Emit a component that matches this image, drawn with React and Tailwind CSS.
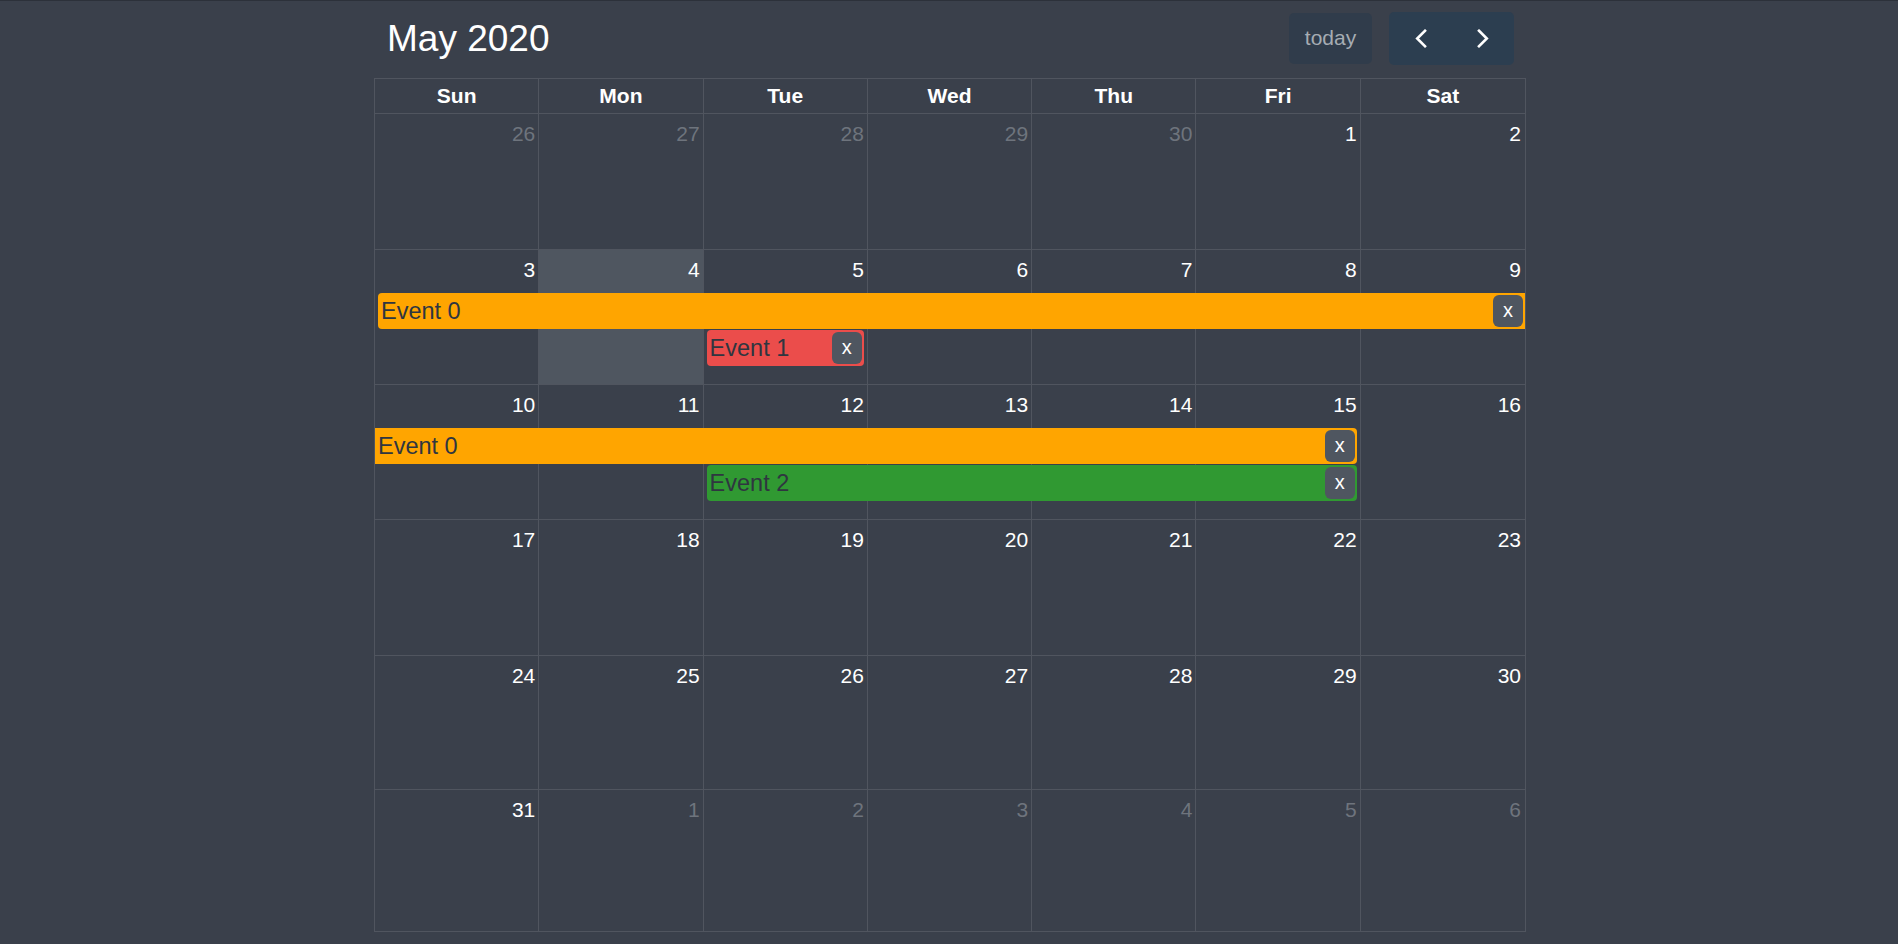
import React from "react";

const font = { fontFamily: '"Liberation Sans", Arial, sans-serif' };

const weeks = [
  {
    h: "h-[136px]",
    days: [
      { n: 26, o: true },
      { n: 27, o: true },
      { n: 28, o: true },
      { n: 29, o: true },
      { n: 30, o: true },
      { n: 1 },
      { n: 2 },
    ],
    events: [],
  },
  {
    h: "h-[135px]",
    days: [{ n: 3 }, { n: 4, t: true }, { n: 5 }, { n: 6 }, { n: 7 }, { n: 8 }, { n: 9 }],
    events: [
      {
        label: "Event 0",
        cls: "col-start-1 col-span-7 row-start-2 ml-[3px] rounded-l-[4px] bg-[#ffa500]",
      },
      {
        label: "Event 1",
        cls: "col-start-3 col-span-1 row-start-3 ml-[3px] mr-[4px] rounded-[4px] bg-[#eb4d4b]",
      },
    ],
  },
  {
    h: "h-[135px]",
    days: [{ n: 10 }, { n: 11 }, { n: 12 }, { n: 13 }, { n: 14 }, { n: 15 }, { n: 16 }],
    events: [
      {
        label: "Event 0",
        cls: "col-start-1 col-span-6 row-start-2 mr-[4px] rounded-r-[4px] bg-[#ffa500]",
      },
      {
        label: "Event 2",
        cls: "col-start-3 col-span-4 row-start-3 ml-[3px] mr-[4px] rounded-[4px] bg-[#309932]",
      },
    ],
  },
  {
    h: "h-[136px]",
    days: [{ n: 17 }, { n: 18 }, { n: 19 }, { n: 20 }, { n: 21 }, { n: 22 }, { n: 23 }],
    events: [],
  },
  {
    h: "h-[134px]",
    days: [{ n: 24 }, { n: 25 }, { n: 26 }, { n: 27 }, { n: 28 }, { n: 29 }, { n: 30 }],
    events: [],
  },
  {
    h: "h-[142px]",
    days: [
      { n: 31 },
      { n: 1, o: true },
      { n: 2, o: true },
      { n: 3, o: true },
      { n: 4, o: true },
      { n: 5, o: true },
      { n: 6, o: true },
    ],
    events: [],
  },
];

const dayNames = ["Sun", "Mon", "Tue", "Wed", "Thu", "Fri", "Sat"];

function Chevron({ left }) {
  return (
    <svg width="12" height="19" viewBox="0 0 12 19" fill="none">
      <polyline
        points={left ? "10,1.8 2.2,9.5 10,17.2" : "2,1.8 9.8,9.5 2,17.2"}
        stroke="white"
        strokeWidth="2.6"
        strokeLinecap="square"
        strokeLinejoin="miter"
      />
    </svg>
  );
}

function Event({ label, cls }) {
  return (
    <div className={`${cls} h-[36px] mb-[1px] flex items-center justify-between min-w-0`}>
      <span className="pl-[3px] pt-[2px] text-[23.5px] leading-none text-[#2f3640] whitespace-nowrap">
        {label}
      </span>
      <div className="mr-[2px] w-[30px] h-[32px] rounded-[6px] bg-[#4f5660] flex items-center justify-center text-white text-[20px] leading-none pb-[3px] shrink-0">
        x
      </div>
    </div>
  );
}

export default function App() {
  return (
    <div
      className="min-h-screen bg-[#3a404b] border-t border-[#2c313a] text-white flex justify-center pl-[2px]"
      style={font}
    >
      <div className="w-[1152px]">
        <div className="h-[77px] px-[12px] pt-[11px] flex justify-between items-start">
          <div className="h-[53px] flex items-center pl-[1px]">
            <h1 className="text-[37px] leading-none font-normal text-white">May 2020</h1>
          </div>
          <div className="h-[53px] flex items-center gap-[17px]">
            <div className="w-[83px] h-[51px] rounded-[5px] bg-[#303c4b] flex items-center justify-center text-[21px] text-[#a6acb3] pb-[2px]">
              today
            </div>
            <div className="w-[125px] h-[53px] rounded-[5px] bg-[#2c3e50] flex">
              <div className="flex-1 flex items-center justify-center pl-[1px]">
                <Chevron left />
              </div>
              <div className="flex-1 flex items-center justify-center">
                <Chevron />
              </div>
            </div>
          </div>
        </div>

        <div className="border border-[#50555f]">
          <div className="grid grid-cols-7 h-[34px]">
            {dayNames.map((d, i) => (
              <div
                key={d}
                className={`flex items-center justify-center text-[21px] font-bold text-white ${
                  i < 6 ? "border-r border-[#50555f]" : ""
                }`}
              >
                {d}
              </div>
            ))}
          </div>

          {weeks.map((w, wi) => (
            <div key={wi} className={`relative border-t border-[#50555f] ${w.h}`}>
              <div className="absolute inset-0 grid grid-cols-7">
                {w.days.map((d, i) => (
                  <div
                    key={i}
                    className={`${i < 6 ? "border-r border-[#50555f]" : ""} ${
                      d.t ? "bg-[#4f5660]" : ""
                    }`}
                  />
                ))}
              </div>
              <div className="relative grid grid-cols-7">
                {w.days.map((d, i) => (
                  <div
                    key={i}
                    className={`row-start-1 h-[43px] pt-[8px] pr-[4px] text-right text-[21px] leading-[24px] ${
                      d.o ? "text-[#6e747d]" : "text-white"
                    }`}
                  >
                    {d.n}
                  </div>
                ))}
                {w.events.map((e, i) => (
                  <Event key={i} {...e} />
                ))}
              </div>
            </div>
          ))}
        </div>
      </div>
    </div>
  );
}
